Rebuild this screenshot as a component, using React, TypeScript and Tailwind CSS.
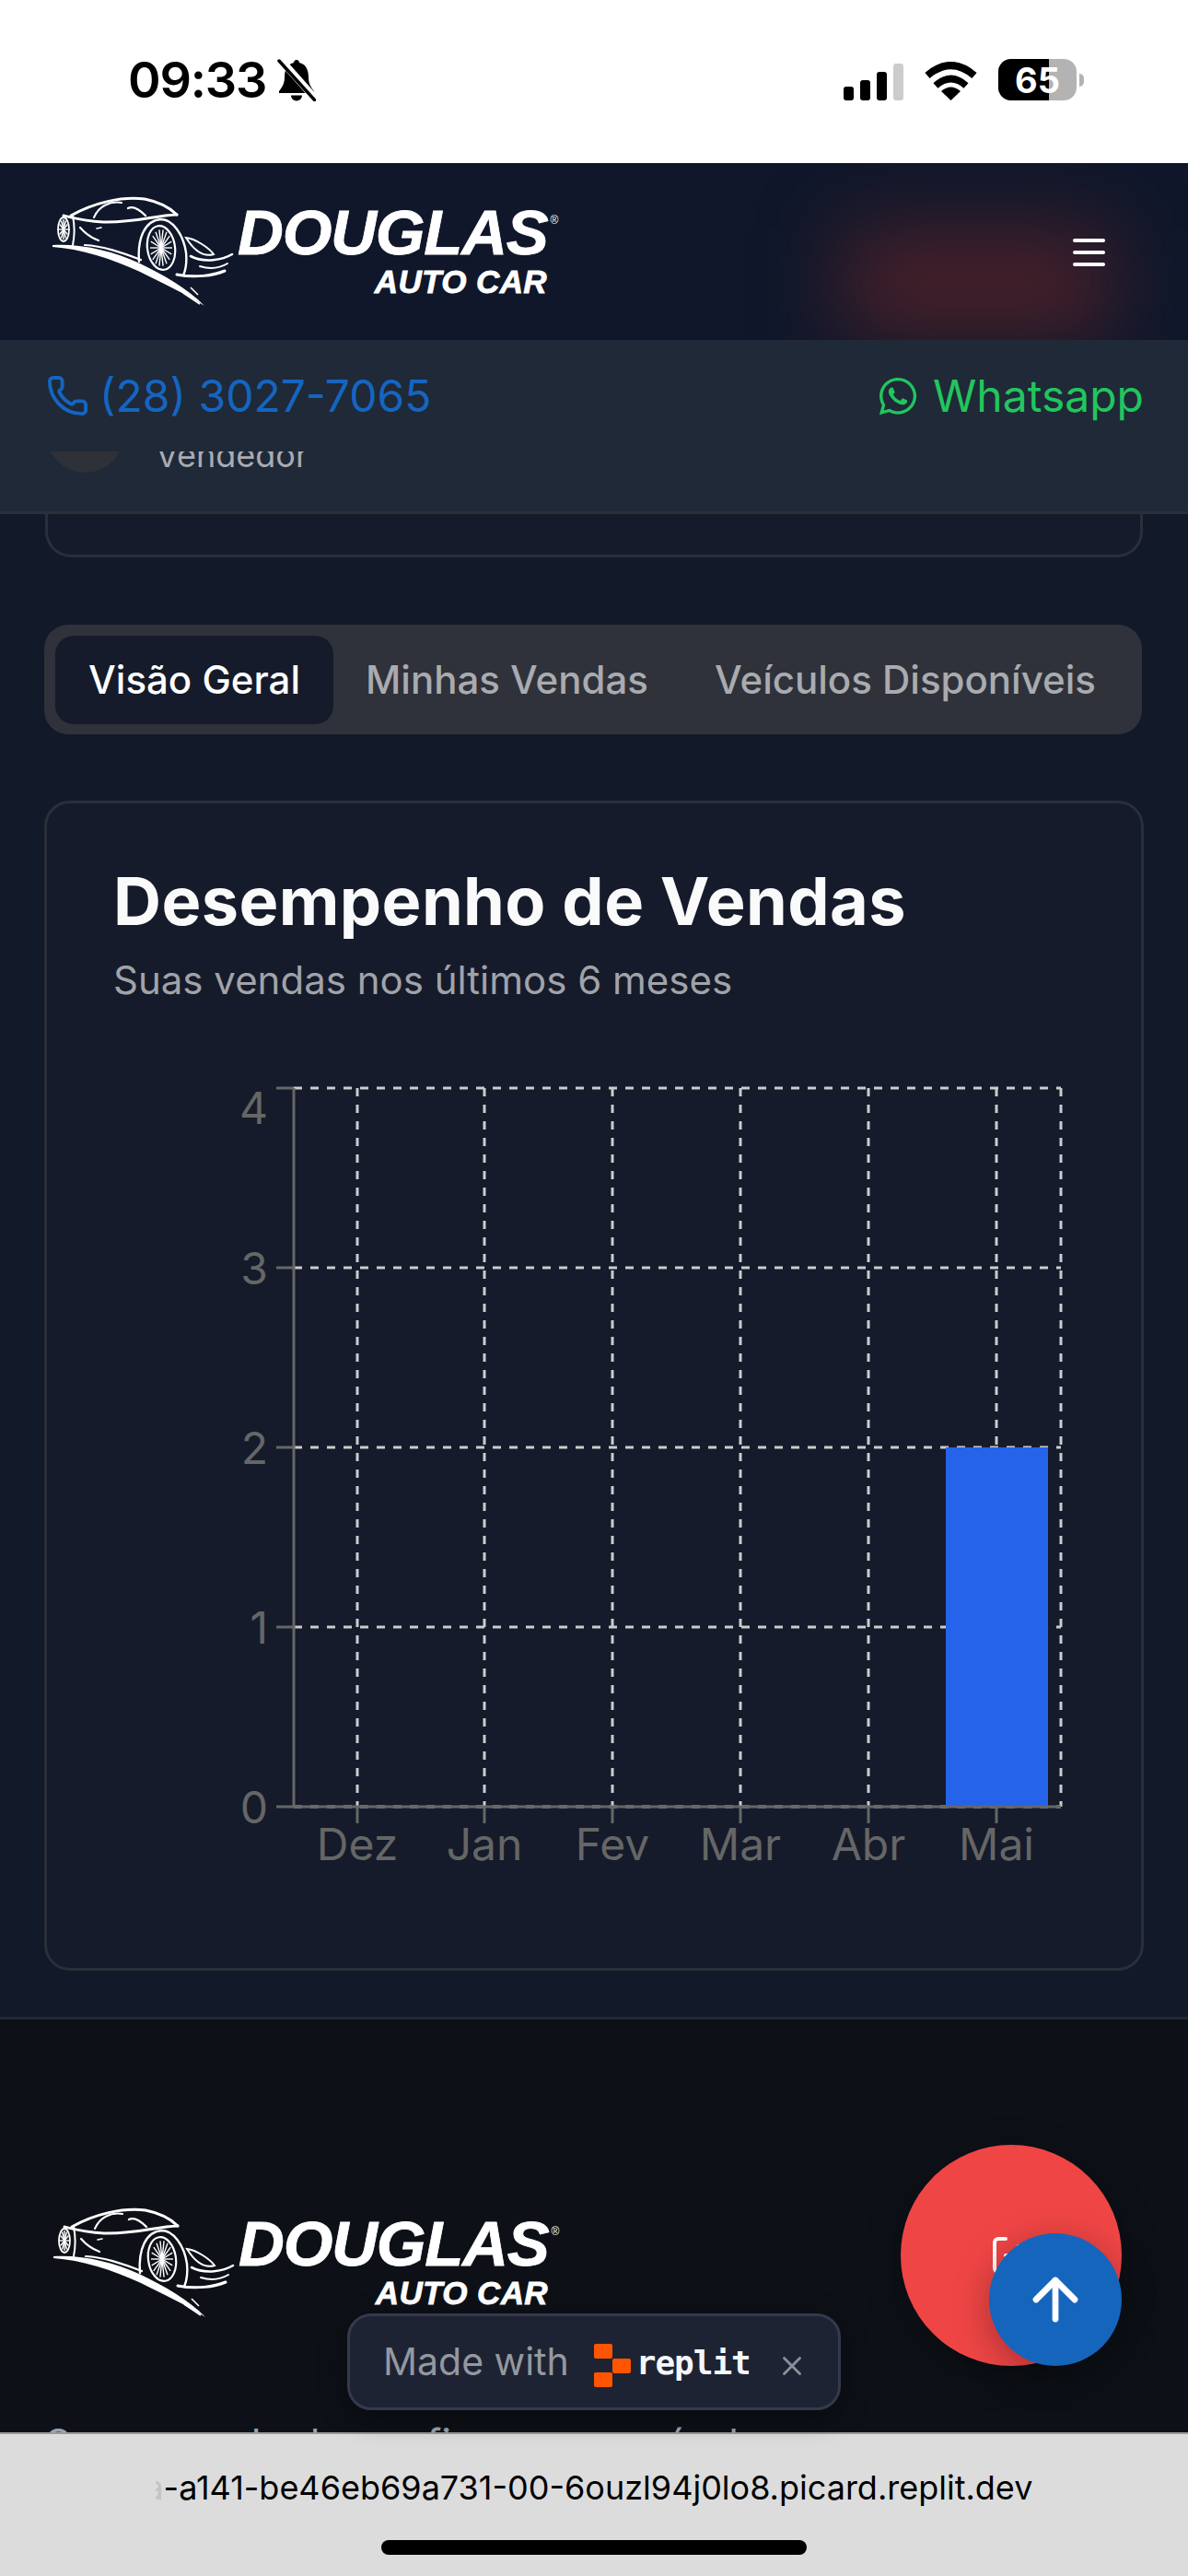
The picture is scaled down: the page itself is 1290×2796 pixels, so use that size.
import { Phone, LogOut, ArrowUp, X } from 'lucide-react';
import { FaWhatsapp } from 'react-icons/fa';

const months = [
  { label: 'Dez', x: 388 },
  { label: 'Jan', x: 526 },
  { label: 'Fev', x: 665 },
  { label: 'Mar', x: 804 },
  { label: 'Abr', x: 943 },
  { label: 'Mai', x: 1082 },
];

const rows = [
  { label: '4', y: 1181, textY: 1220 },
  { label: '3', y: 1376, textY: 1394 },
  { label: '2', y: 1571, textY: 1589 },
  { label: '1', y: 1766, textY: 1784 },
  { label: '0', y: 1961, textY: 1979 },
];

function Spokes({ cx, cy, rx, ry, count }: { cx: number; cy: number; rx: number; ry: number; count: number }) {
  return (
    <g stroke="white" strokeWidth="1.4">
      {Array.from({ length: count }).map((_, i) => {
        const a = (i / count) * Math.PI * 2;
        return <line key={i} x1={cx} y1={cy} x2={cx + Math.cos(a) * rx} y2={cy + Math.sin(a) * ry} />;
      })}
    </g>
  );
}

function CarMark() {
  return (
    <svg width="196" height="119" viewBox="0 0 196 119" fill="none" className="shrink-0 overflow-visible blur-[0.4px]">
      <g stroke="white" strokeLinecap="round">
        <path d="M20 20C45 6 75 -1 100 2C115 5 128 12 135 19" strokeWidth="3" />
        <path d="M135 19C110 20 90 28 55 27C35 26 20 22 12 20" strokeWidth="3" />
        <path d="M45 22C50 10 62 4 75 6" strokeWidth="2" />
        <path d="M82 12C88 9 96 15 101 20" strokeWidth="2.4" />
        <path d="M22 20C24 30 24 42 22 52" strokeWidth="2" />
        <path d="M30 33C36 40 42 44 50 47" strokeWidth="2.2" />
        <path d="M48 34l5 -1" strokeWidth="1.6" />
        <path d="M35 52C55 53 75 60 96 68" strokeWidth="2.2" />
        <path d="M94 70C92 45 100 25 118 24C130 24 142 40 145 60C146 70 145 78 142 85" strokeWidth="2.4" />
        <ellipse cx="118" cy="55" rx="15" ry="24" transform="rotate(-8 118 55)" strokeWidth="2.2" />
        <path d="M145 44C155 45 170 55 175 62C165 65 155 60 145 44Z" strokeWidth="2" />
        <path d="M150 64C165 72 185 68 195 62" strokeWidth="2.6" />
        <path d="M160 75C170 78 180 78 190 72" strokeWidth="2" />
        <path d="M135 84C155 88 175 85 187 80" strokeWidth="3" />
        <ellipse cx="12" cy="35" rx="6" ry="13" strokeWidth="1.8" />
      </g>
      <path d="M0 52C30 50 65 58 95 72C120 84 148 100 165 118C145 105 115 91 95 81C65 67 30 56 0 54Z" fill="white" />
      <path d="M150 98L158 106M142 104L160 116" stroke="white" strokeWidth="1.6" />
      <Spokes cx={118} cy={55} rx={12} ry={20} count={18} />
      <Spokes cx={12} cy={35} rx={5} ry={11} count={12} />
    </svg>
  );
}

function Logo() {
  return (
    <div className="flex w-[552px] h-[119px] font-['Liberation_Sans',sans-serif] text-white italic font-bold [-webkit-text-stroke:0.8px_white]">
      <CarMark />
      <div className="ml-[5px] pt-[14px] w-[348px]">
        <div className="flex items-start leading-[50px] text-[69px] tracking-[-1.2px]">
          DOUGLAS
          <span className="ml-[3px] mt-[-14px] text-[12px] not-italic font-normal tracking-normal [-webkit-text-stroke:0px_white]">®</span>
        </div>
        <div className="mt-[15px] w-[336px] text-right text-[35px] leading-[25px] tracking-[0.4px]">AUTO CAR</div>
      </div>
    </div>
  );
}

function WifiIcon() {
  return (
    <svg width="57" height="42" viewBox="0 0 57 42" fill="none">
      <path d="M3 15Q28.5 -7 54 15" stroke="black" strokeWidth="8" />
      <path d="M12 26Q28.5 11 45 26" stroke="black" strokeWidth="7.5" />
      <path d="M28.5 42L18 32Q28.5 23 39 32Z" fill="black" />
    </svg>
  );
}

function MutedBell() {
  return (
    <svg width="42" height="46" viewBox="0 0 42 46">
      <path d="M21 1c-2 0-3 1.5-3 3C10 6 8 13 8 20c0 7-3 11-6 15v2h38v-2c-3-4-6-8-6-15 0-7-2-14-10-16 0-1.500-1-3-3-3z" fill="black" />
      <path d="M15 39.500a6 6 0 0 0 12 0z" fill="black" />
      <line x1="3" y1="0" x2="44" y2="46" stroke="white" strokeWidth="8" />
      <line x1="2" y1="2" x2="41" y2="45" stroke="black" strokeWidth="3.5" strokeLinecap="round" />
    </svg>
  );
}

function StatusBar() {
  return (
    <div className="h-[177px] shrink-0 bg-white flex items-center justify-between pl-[139px] pr-[113px] pb-[4px] text-black">
      <div className="flex items-center gap-[12px]">
        <span className="text-[54px] leading-none font-semibold tracking-[-1.2px]">09:33</span>
        <MutedBell />
      </div>
      <div className="flex items-end">
        <div className="flex items-end gap-[7px]">
          <span className="w-[11px] h-[15px] rounded-[3px] bg-black" />
          <span className="w-[11px] h-[22px] rounded-[3px] bg-black" />
          <span className="w-[11px] h-[31px] rounded-[3px] bg-black" />
          <span className="w-[11px] h-[40px] rounded-[3px] bg-[#cccccc]" />
        </div>
        <div className="ml-[23px]">
          <WifiIcon />
        </div>
        <div className="ml-[23px] flex items-center">
          <div className="relative w-[85px] h-[45px] rounded-[14px] overflow-hidden bg-[#b3b3b3] flex items-center justify-center">
            <span className="absolute left-0 top-0 bottom-0 w-[55px] bg-black" />
            <span className="relative text-[38px] leading-none font-bold text-white">65</span>
          </div>
          <span className="ml-[3px] w-[5px] h-[14px] rounded-r-full bg-[#b3b3b3]" />
        </div>
      </div>
    </div>
  );
}

function Header() {
  return (
    <header className="relative h-[192px] shrink-0 overflow-hidden bg-[#10172a] flex items-start justify-between pl-[57px] pr-[90px] pt-[37px]">
      <div className="absolute left-[915px] top-[70px] w-[290px] h-[120px] bg-[#45202a] blur-[42px]" />
      <div className="relative">
        <Logo />
      </div>
      <button className="relative mt-[45px] flex flex-col gap-[9px]">
        <span className="block w-[35px] h-[4px] rounded-full bg-white" />
        <span className="block w-[35px] h-[4px] rounded-full bg-white" />
        <span className="block w-[35px] h-[4px] rounded-full bg-white" />
      </button>
    </header>
  );
}

function ContactBar() {
  return (
    <div className="h-[189px] shrink-0 bg-[#1f2937] border-b-[3px] border-[#2a2f39]">
      <div className="h-[121px] flex items-center justify-between pl-[50px] pr-[48px]">
        <a className="flex items-center gap-[11px] text-[48px] text-[#1565c0]">
          <Phone size={47} strokeWidth={2} />
          <span>(28) 3027-7065</span>
        </a>
        <a className="flex items-center gap-[15px] text-[48px] text-[#22c55e]">
          <FaWhatsapp size={46} />
          <span>Whatsapp</span>
        </a>
      </div>
      <div className="h-[65px] overflow-hidden flex pl-[50px] gap-[34px]">
        <div className="w-[85px] h-[85px] shrink-0 -mt-[62px] rounded-full bg-[#2e3138]" />
        <span className="-mt-[18px] text-[36px] leading-[44px] text-[#a9abb0]">Vendedor</span>
      </div>
    </div>
  );
}

function Tabs() {
  return (
    <div className="mt-[73px] ml-[48px] mr-[50px] h-[119px] rounded-[26px] bg-[#2f323a] flex items-center pl-[12px] text-[42px] font-medium text-[#a9abb0]">
      <div className="h-[96px] w-[302px] rounded-[20px] bg-[#151b2a] text-white flex items-center justify-center">Visão Geral</div>
      <div className="ml-[35px]">Minhas Vendas</div>
      <div className="ml-[72px]">Veículos Disponíveis</div>
    </div>
  );
}

function SalesChart() {
  return (
    <svg width="1043" height="900" viewBox="124 1160 1043 900" className="mt-[71px] ml-[1px] block font-['Inter',sans-serif]">
      {rows.map(r => (
        <line key={r.y} x1={319} x2={1152} y1={r.y} y2={r.y} stroke="#cccccc" strokeWidth="3" strokeDasharray="9 9" />
      ))}
      {[...months.map(m => m.x), 1152].map(x => (
        <line key={x} x1={x} x2={x} y1={1181} y2={1961} stroke="#cccccc" strokeWidth="3" strokeDasharray="9 9" />
      ))}
      <rect x="1027" y="1571" width="111" height="390" fill="#2563eb" />
      <line x1="319" x2="319" y1="1181" y2="1961" stroke="#666666" strokeWidth="3" />
      <line x1="319" x2="1152" y1="1961" y2="1961" stroke="#666666" strokeWidth="3" />
      {rows.map(r => (
        <g key={r.label}>
          <line x1="300" x2="319" y1={r.y} y2={r.y} stroke="#666666" strokeWidth="3" />
          <text x="291" y={r.textY} textAnchor="end" fontSize="48" fill="#666666">
            {r.label}
          </text>
        </g>
      ))}
      {months.map(m => (
        <g key={m.label}>
          <line x1={m.x} x2={m.x} y1="1961" y2="1979" stroke="#666666" strokeWidth="3" />
          <text x={m.x} y="2019" textAnchor="middle" fontSize="48" fill="#666666">
            {m.label}
          </text>
        </g>
      ))}
    </svg>
  );
}

function MadeWithBadge() {
  return (
    <div className="absolute left-[377px] top-[2511px] w-[536px] h-[105px] rounded-[26px] bg-[#1e2333] border-[3px] border-[#343a4b] shadow-[0_8px_30px_rgba(0,0,0,0.4)] flex items-center pl-[36px]">
      <span className="text-[41px] leading-none text-[#94989f]">Made with</span>
      <svg width="40" height="47" viewBox="0 0 40 47" className="ml-[27px] mt-[7px] shrink-0">
        <rect x="0" y="0" width="20" height="16" rx="2" fill="#ff5500" />
        <rect x="20" y="16" width="20" height="16" rx="2" fill="#ff5500" />
        <rect x="0" y="31" width="20" height="16" rx="2" fill="#ff5500" />
      </svg>
      <span className="ml-[6px] mt-[2px] font-['DejaVu_Sans_Mono',monospace] font-bold text-[36px] leading-none tracking-[-1px] text-[#f5f7fb]">replit</span>
      <X size={34} strokeWidth={2} className="ml-[28px] mt-[8px] text-[#8a8f99]" />
    </div>
  );
}

function FloatingButtons() {
  return (
    <>
      <button className="absolute left-[978px] top-[2328px] w-[240px] h-[240px] rounded-full bg-[#f04545] shadow-[0_10px_40px_rgba(0,0,0,0.3)] flex items-center justify-center text-white">
        <LogOut size={48} strokeWidth={2} />
      </button>
      <button className="absolute left-[1074px] top-[2424px] w-[144px] h-[144px] rounded-full bg-[#1565bd] shadow-[0_10px_40px_rgba(0,0,0,0.3)] flex items-center justify-center text-white">
        <ArrowUp size={72} strokeWidth={2.25} />
      </button>
    </>
  );
}

export default function App() {
  return (
    <div className="relative w-[1290px] h-[2796px] overflow-hidden flex flex-col bg-[#121929] font-['Inter',sans-serif]">
      <StatusBar />
      <Header />
      <ContactBar />

      <main className="flex-1 min-h-0 overflow-hidden flex flex-col">
        <div className="h-[47px] shrink-0 mx-[49px] rounded-b-[28px] bg-[#151b2a] border-[3px] border-t-0 border-[#2a2f3a]" />
        <Tabs />

        <section className="mt-[72px] mx-[48px] rounded-[28px] bg-[#151b2a] border-[3px] border-[#2a2f3a] pl-[72px] pt-[66px] pb-[76px]">
          <h2 className="text-[72px] leading-[80px] font-bold text-[#fafafa] tracking-[0.4px]">Desempenho de Vendas</h2>
          <p className="mt-[21px] text-[42px] leading-[50px] text-[#a1a3a8]">Suas vendas nos últimos 6 meses</p>
          <SalesChart />
        </section>

        <footer className="mt-[50px] flex-1 min-h-0 bg-[#0d1117] border-t-[3px] border-[#222732] pt-[205px] pl-[58px]">
          <Logo />
          <p className="-ml-[9px] mt-[106px] text-[44px] leading-[60px] whitespace-nowrap text-[#9ca3af]">Sua revenda de confiança em veículos</p>
        </footer>
      </main>

      <div className="relative h-[156px] shrink-0 bg-[#dcdcdd] border-t-2 border-[#9a9a9a] flex flex-col items-center">
        <div className="mt-[36px] flex h-[44px] text-[36px] leading-[44px] text-black whitespace-nowrap">
          <span className="w-[9px] overflow-hidden flex justify-end text-[#c4c4c4]">a</span>
          <span>-a141-be46eb69a731-00-6ouzl94j0lo8.picard.replit.dev</span>
        </div>
        <div className="absolute left-[414px] top-[115px] w-[462px] h-[16px] rounded-full bg-black" />
      </div>

      <FloatingButtons />
      <MadeWithBadge />
    </div>
  );
}
